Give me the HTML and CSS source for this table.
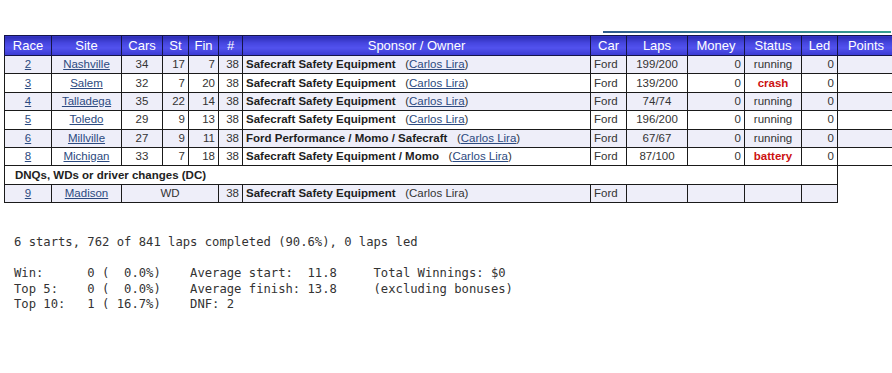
FILE: index.html
```html
<!DOCTYPE html>
<html>
<head>
<meta charset="utf-8">
<link rel="stylesheet" href="styles.css">
</head>
<body>
<div class="topbar"></div>
<table class="results">
<colgroup>
<col class="c-race"><col class="c-site"><col class="c-cars"><col class="c-st"><col class="c-fin"><col class="c-num"><col class="c-spon"><col class="c-car"><col class="c-laps"><col class="c-money"><col class="c-status"><col class="c-led"><col class="c-pts">
</colgroup>
<thead>
<tr><th>Race</th><th>Site</th><th>Cars</th><th>St</th><th>Fin</th><th>#</th><th>Sponsor / Owner</th><th>Car</th><th>Laps</th><th>Money</th><th>Status</th><th>Led</th><th>Points</th></tr>
</thead>
<tbody>
<tr class="odd"><td class="c"><a href="#">2</a></td><td class="c"><a href="#">Nashville</a></td><td class="c">34</td><td class="r">17</td><td class="r">7</td><td class="r">38</td><td class="l"><b>Safecraft Safety Equipment</b>&nbsp;&nbsp; (<a href="#">Carlos Lira</a>)</td><td class="l">Ford</td><td class="c">199/200</td><td class="r">0</td><td class="c">running</td><td class="r">0</td><td></td></tr>
<tr class="even"><td class="c"><a href="#">3</a></td><td class="c"><a href="#">Salem</a></td><td class="c">32</td><td class="r">7</td><td class="r">20</td><td class="r">38</td><td class="l"><b>Safecraft Safety Equipment</b>&nbsp;&nbsp; (<a href="#">Carlos Lira</a>)</td><td class="l">Ford</td><td class="c">139/200</td><td class="r">0</td><td class="c bad">crash</td><td class="r">0</td><td></td></tr>
<tr class="odd"><td class="c"><a href="#">4</a></td><td class="c"><a href="#">Talladega</a></td><td class="c">35</td><td class="r">22</td><td class="r">14</td><td class="r">38</td><td class="l"><b>Safecraft Safety Equipment</b>&nbsp;&nbsp; (<a href="#">Carlos Lira</a>)</td><td class="l">Ford</td><td class="c">74/74</td><td class="r">0</td><td class="c">running</td><td class="r">0</td><td></td></tr>
<tr class="even"><td class="c"><a href="#">5</a></td><td class="c"><a href="#">Toledo</a></td><td class="c">29</td><td class="r">9</td><td class="r">13</td><td class="r">38</td><td class="l"><b>Safecraft Safety Equipment</b>&nbsp;&nbsp; (<a href="#">Carlos Lira</a>)</td><td class="l">Ford</td><td class="c">196/200</td><td class="r">0</td><td class="c">running</td><td class="r">0</td><td></td></tr>
<tr class="odd"><td class="c"><a href="#">6</a></td><td class="c"><a href="#">Millville</a></td><td class="c">27</td><td class="r">9</td><td class="r">11</td><td class="r">38</td><td class="l"><b>Ford Performance / Momo / Safecraft</b>&nbsp;&nbsp; (<a href="#">Carlos Lira</a>)</td><td class="l">Ford</td><td class="c">67/67</td><td class="r">0</td><td class="c">running</td><td class="r">0</td><td></td></tr>
<tr class="even"><td class="c"><a href="#">8</a></td><td class="c"><a href="#">Michigan</a></td><td class="c">33</td><td class="r">7</td><td class="r">18</td><td class="r">38</td><td class="l"><b>Safecraft Safety Equipment / Momo</b>&nbsp;&nbsp; (<a href="#">Carlos Lira</a>)</td><td class="l">Ford</td><td class="c">87/100</td><td class="r">0</td><td class="c bad">battery</td><td class="r">0</td><td></td></tr>
<tr class="even"><td class="dnq" colspan="12">DNQs, WDs or driver changes (DC)</td></tr>
<tr class="odd"><td class="c"><a href="#">9</a></td><td class="c"><a href="#">Madison</a></td><td class="c" colspan="3">WD</td><td class="r">38</td><td class="l"><b>Safecraft Safety Equipment</b>&nbsp;&nbsp; (Carlos Lira)</td><td class="l">Ford</td><td></td><td></td><td></td><td></td></tr>
</tbody>
</table>
<pre class="summary">6 starts, 762 of 841 laps completed (90.6%), 0 laps led

Win:      0 (  0.0%)    Average start:  11.8     Total Winnings: $0
Top 5:    0 (  0.0%)    Average finish: 13.8     (excluding bonuses)
Top 10:   1 ( 16.7%)    DNF: 2
</pre>
</body>
</html>
```
FILE: styles.css
```css
html, body {
  margin: 0;
  padding: 0;
  background: #ffffff;
  overflow: hidden;
}
body {
  padding: 31px 0 0 4px;
  font-family: "Liberation Sans", Arial, sans-serif;
}
.topbar {
  margin-left: 599px;
  width: 288px;
  height: 2px;
  margin-bottom: 2px;
  background: linear-gradient(to right, #2f5a8c, #37a08f);
}
.results {
  border-collapse: collapse;
  table-layout: fixed;
  width: 890px;
  font-size: 11.5px;
  color: #333;
}
.c-race { width: 47px; }
.c-site { width: 70px; }
.c-cars { width: 41px; }
.c-st { width: 26px; }
.c-fin { width: 30px; }
.c-num { width: 24px; }
.c-spon { width: 348px; }
.c-car { width: 36px; }
.c-laps { width: 61px; }
.c-money { width: 57px; }
.c-status { width: 57px; }
.c-led { width: 36px; }
.c-pts { width: 57px; }
.results th {
  height: 19px;
  padding: 0;
  font-weight: normal;
  font-size: 13px;
  color: #ffffff;
  border: 1px solid #14144a;
  background: linear-gradient(to bottom, #2c2cb4 0%, #4646e0 35%, #5252ee 60%, #3a3ad2 100%);
  white-space: nowrap;
  overflow: hidden;
}
.results td {
  height: 17.4px;
  padding: 0 3px;
  border: 1px solid #1a1a1a;
  white-space: nowrap;
  overflow: hidden;
  line-height: 17px;
}
.results tr.odd td { background: #eeeef9; }
.results tr.even td { background: #ffffff; }
.results td.c { text-align: center; }
.results td.r { text-align: right; }
.results td.l { text-align: left; }
.results td.bad { color: #cc1111; font-weight: bold; }
.results td.dnq {
  font-weight: bold;
  color: #222;
  padding-left: 10px;
  text-align: left;
}
.results b { color: #1e1e1e; }
.results a { color: #2c4a80; text-decoration: underline; }
.summary {
  margin: 32px 0 0 10px;
  font-family: "DejaVu Sans Mono", monospace;
  font-size: 12.2px;
  line-height: 15.5px;
  color: #333;
}
```
